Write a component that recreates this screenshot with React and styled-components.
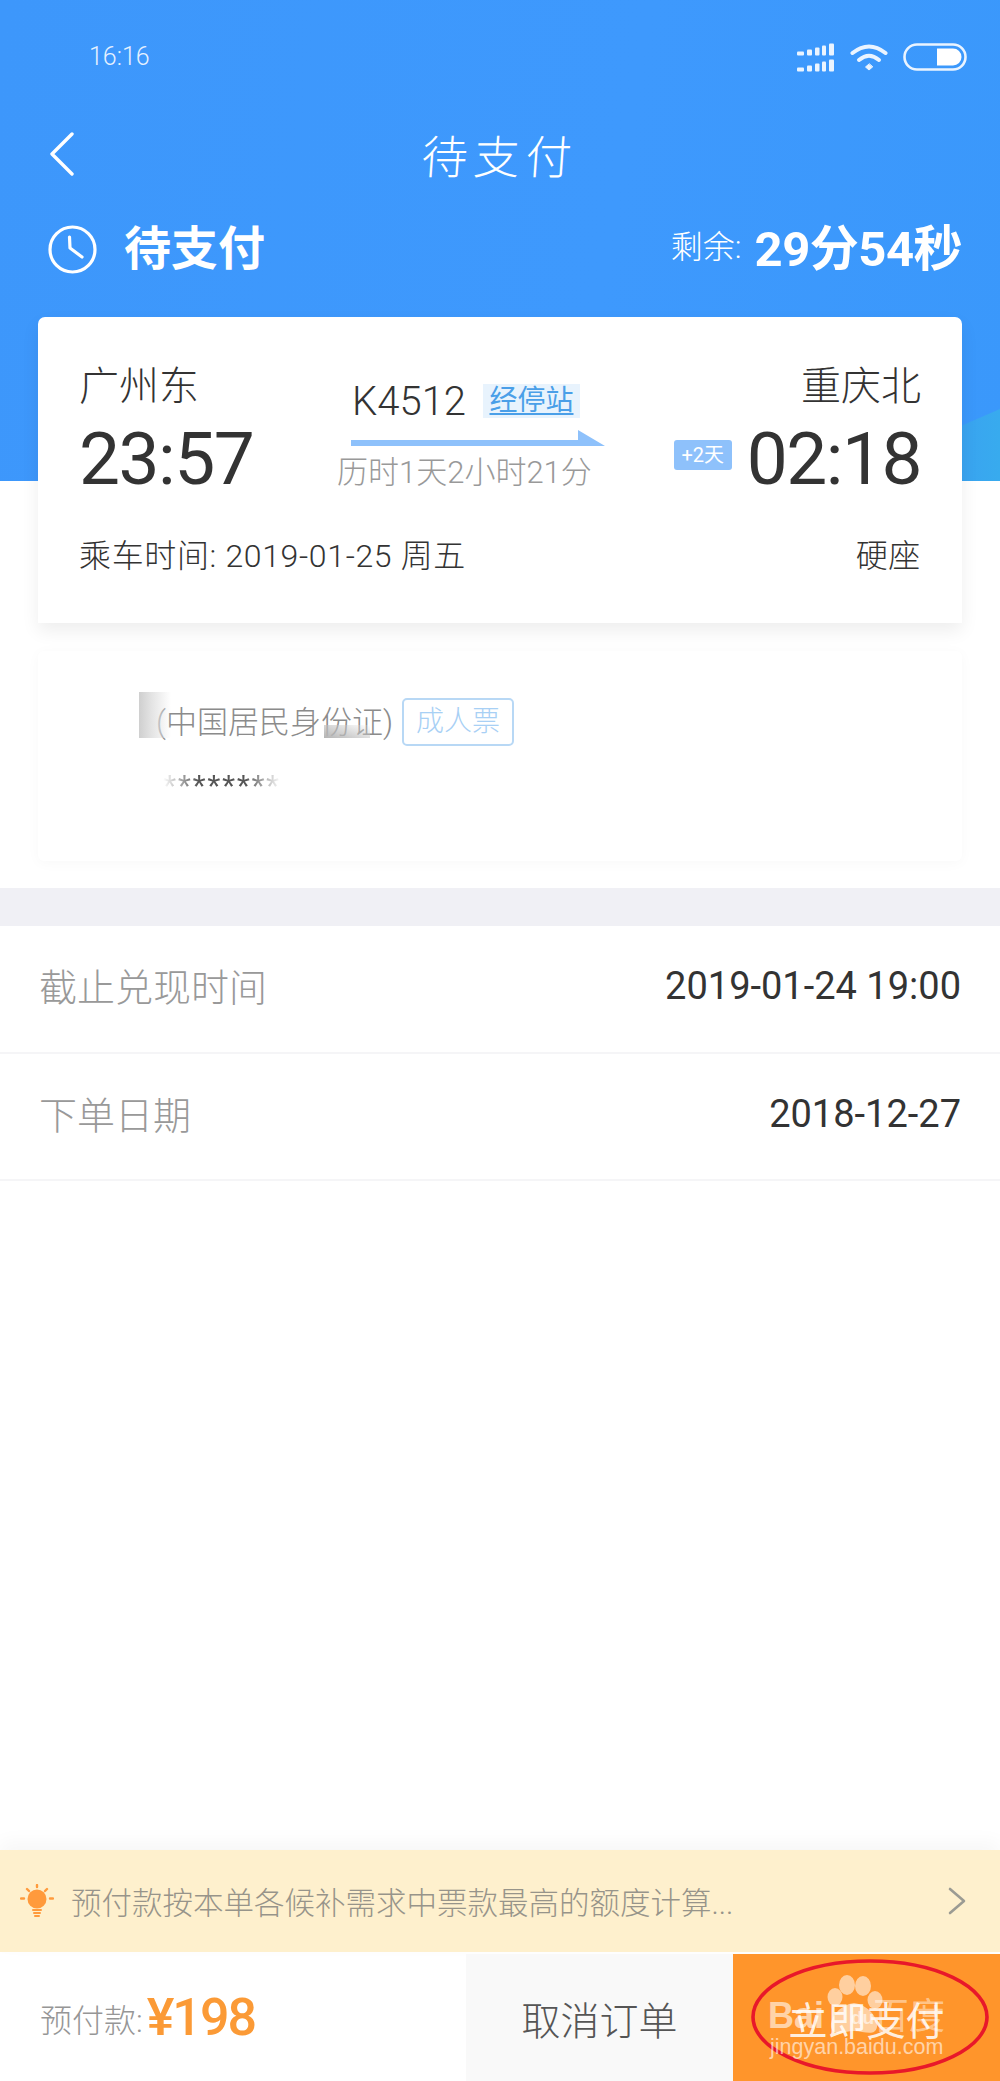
import React from 'react'
import styled, { createGlobalStyle } from 'styled-components'

const GlobalStyle = createGlobalStyle`
  html, body {
    margin: 0;
    padding: 0;
    background: #fff;
  }
  * {
    box-sizing: border-box;
  }
`

const sans = `Roboto, "Noto Sans CJK SC", sans-serif`

const Page = styled.div`
  width: 1000px;
  height: 2081px;
  display: flex;
  flex-direction: column;
  overflow: hidden;
  background: #fff;
  font-family: ${sans};
  color: #333;
`

const Hero = styled.header`
  position: relative;
  height: 481px;
  flex: none;
  color: #fff;
  background: linear-gradient(100deg, #3d97fb 0%, #3e99fd 60%, #3a98fb 100%);
  &::after {
    content: '';
    position: absolute;
    right: 0;
    bottom: 0;
    width: 60px;
    height: 72px;
    background: linear-gradient(90deg, #3a9ff2, #38abee);
    clip-path: polygon(0 26px, 100% 0, 100% 100%, 0 100%);
  }
`

const StatusBar = styled.div`
  height: 108px;
  padding: 43px 33px 0 89px;
  display: flex;
  justify-content: space-between;
  align-items: flex-start;
`

const Clock = styled.span`
  font-size: 25px;
  line-height: 28px;
  font-weight: 300;
  color: #e6f1ff;
`

const StatusIcons = styled.div`
  display: flex;
  align-items: flex-start;
  gap: 15px;
`

const NavBar = styled.div`
  height: 92px;
  margin-bottom: 13px;
  padding: 0 0 0 50px;
  display: flex;
  align-items: center;
  position: relative;
`

const NavTitle = styled.h1`
  position: absolute;
  left: 0;
  right: 0;
  margin: 0;
  text-align: center;
  font-size: 46px;
  font-weight: 300;
  letter-spacing: 6px;
  transform: skewX(-4deg);
`

const StateRow = styled.div`
  height: 72px;
  padding: 0 38px 0 48px;
  display: flex;
  align-items: center;
  justify-content: space-between;
`

const StateLeft = styled.div`
  display: flex;
  align-items: center;
  gap: 27px;
`

const StateTitle = styled.span`
  font-size: 47px;
  font-weight: 700;
  line-height: 60px;
`

const Remain = styled.div`
  display: flex;
  align-items: center;
  gap: 13px;
  margin-bottom: 10px;
`

const RemainLabel = styled.span`
  font-size: 32px;
  font-weight: 300;
`

const RemainValue = styled.span`
  font-size: 49px;
  font-weight: 700;
  letter-spacing: -0.5px;
`

const TicketCard = styled.section`
  position: relative;
  z-index: 1;
  flex: none;
  margin: -164px 38px 0;
  height: 306px;
  padding: 40px 41px 0 41px;
  background: #fff;
  border-radius: 7px 7px 0 0;
  box-shadow: 0 8px 18px rgba(0, 0, 0, 0.07);
`

const Route = styled.div`
  display: flex;
`

const Station = styled.div`
  flex: ${(p) => (p.$end ? '1' : 'none')};
  width: ${(p) => (p.$end ? 'auto' : '258px')};
  display: flex;
  flex-direction: column;
  align-items: ${(p) => (p.$end ? 'flex-end' : 'flex-start')};
`

const StationName = styled.div`
  font-size: 40px;
  line-height: 60px;
  font-weight: 300;
`

const TimeRow = styled.div`
  display: flex;
  align-items: center;
  gap: 15px;
`

const Time = styled.div`
  font-size: 73px;
  line-height: 84px;
  font-weight: 400;
  letter-spacing: -1.5px;
`

const DayBadge = styled.span`
  width: 58px;
  height: 30px;
  margin-top: -8px;
  border-radius: 3px;
  background: #8ec1fb;
  color: #fff;
  font-size: 20px;
  line-height: 30px;
  text-align: center;
`

const Middle = styled.div`
  width: 268px;
  flex: none;
  padding-top: 27px;
`

const TrainRow = styled.div`
  height: 34px;
  padding-left: 15px;
  display: flex;
  align-items: center;
  gap: 17px;
`

const TrainNo = styled.span`
  font-size: 40px;
  font-weight: 300;
`

const StopsTag = styled.span`
  width: 97px;
  height: 34px;
  background: #e8f3fd;
  color: #4a9fe8;
  font-size: 28px;
  line-height: 34px;
  text-align: center;
  text-decoration: underline;
  text-underline-offset: 3px;
`

const ArrowWrap = styled.div`
  margin: 12px 0 0 14px;
  height: 16px;
  display: flex;
`

const Duration = styled.div`
  margin-top: 9px;
  font-size: 31px;
  line-height: 36px;
  font-weight: 300;
  color: #999;
  white-space: nowrap;
`

const DateRow = styled.div`
  margin-top: 35px;
  display: flex;
  justify-content: space-between;
  font-size: 32px;
  line-height: 40px;
  font-weight: 300;
  letter-spacing: 0.65px;
`

const PassengerCard = styled.section`
  position: relative;
  flex: none;
  margin: 28px 38px 0;
  height: 210px;
  padding: 46px 0 0 118px;
  border-radius: 6px;
  background: #fff;
  box-shadow: 0 2px 14px rgba(0, 0, 0, 0.03);
`

const PassengerRow = styled.div`
  display: flex;
  align-items: center;
  gap: 9px;
  height: 50px;
`

const IdType = styled.span`
  margin-top: -6px;
  font-size: 31px;
  font-weight: 300;
  color: #8b8b8b;
`

const TicketTag = styled.span`
  width: 112px;
  height: 48px;
  border: 2px solid #b8d8f5;
  border-radius: 5px;
  color: #a8d0f5;
  font-size: 28px;
  line-height: 44px;
  text-align: center;
  font-weight: 300;
`

const Masked = styled.div`
  margin: 19px 0 0 7px;
  width: 118px;
  font-family: "Liberation Sans", sans-serif;
  font-size: 34px;
  line-height: 40px;
  letter-spacing: 1.5px;
  color: #555;
  white-space: nowrap;
  -webkit-mask-image: linear-gradient(90deg, transparent 0, #000 30%, #000 70%, transparent 100%);
  mask-image: linear-gradient(90deg, transparent 0, #000 30%, #000 70%, transparent 100%);
`

const Smudge = styled.div`
  position: absolute;
  left: ${(p) => p.$left}px;
  top: ${(p) => p.$top}px;
  width: ${(p) => p.$w}px;
  height: ${(p) => p.$h}px;
  background: ${(p) => p.$bg};
`

const Band = styled.div`
  flex: none;
  height: 38px;
  margin-top: 27px;
  background: #f0f0f5;
`

const InfoRow = styled.div`
  flex: none;
  height: ${(p) => p.$h}px;
  padding: 0 39px 6px;
  display: flex;
  align-items: center;
  justify-content: space-between;
  border-bottom: 2px solid #f5f5f7;
`

const InfoLabel = styled.span`
  margin-top: -3px;
  font-size: 38px;
  font-weight: 300;
  color: #999;
`

const InfoValue = styled.span`
  font-size: 38px;
  font-weight: 400;
  color: #333;
`

const Spacer = styled.div`
  flex: 1;
`

const TipBar = styled.div`
  flex: none;
  height: 102px;
  padding: 0 34px 0 20px;
  display: flex;
  align-items: center;
  background: #fef0cd;
  box-shadow: 0 -8px 18px rgba(0, 0, 0, 0.035);
`

const TipText = styled.span`
  flex: 1;
  margin-left: 17px;
  font-size: 30.5px;
  font-weight: 300;
  color: #97948a;
  white-space: nowrap;
`

const ActionBar = styled.footer`
  flex: none;
  height: 127px;
  margin-top: 2px;
  display: flex;
`

const Deposit = styled.div`
  width: 466px;
  padding-left: 40px;
  display: flex;
  align-items: center;
  gap: 4px;
`

const DepositLabel = styled.span`
  font-size: 32px;
  font-weight: 300;
  color: #969696;
`

const DepositValue = styled.span`
  font-size: 52px;
  font-weight: 500;
  color: #fb9a36;
  letter-spacing: -2px;
`

const Action = styled.button`
  position: relative;
  width: 267px;
  border: none;
  padding: 0;
  background: ${(p) => (p.$primary ? '#ff952b' : '#f9f9f9')};
  color: ${(p) => (p.$primary ? 'rgba(255, 255, 255, 0.85)' : '#555')};
  font-family: ${sans};
  font-size: 39px;
  font-weight: ${(p) => (p.$primary ? 400 : 300)};
`

const RedRing = styled.svg`
  position: absolute;
  left: 17px;
  top: 5px;
`

const MarkWord = styled.span`
  position: absolute;
  left: ${(p) => p.$left}px;
  top: ${(p) => p.$top}px;
  font-family: "Liberation Sans", "Noto Sans CJK SC", sans-serif;
  font-size: ${(p) => p.$size}px;
  line-height: 1;
  font-weight: ${(p) => p.$weight || 400};
  color: rgba(255, 255, 255, ${(p) => p.$alpha || 0.6});
  white-space: nowrap;
`

const SignalIcon = () => (
  <svg width="38" height="30" viewBox="0 0 38 30" fill="#eaf4ff">
    {[0, 16].map((y) => (
      <g key={y}>
        <rect x="0" y={y + 8.5} width="7" height="4" rx="1" />
        <rect x="10" y={y + 6.5} width="5" height="6" rx="1" />
        <rect x="18" y={y + 4.5} width="4.5" height="8" rx="1" />
        <rect x="25" y={y + 2.5} width="4" height="10" rx="1" />
        <rect x="32" y={y + 0.5} width="5" height="12" rx="1" />
      </g>
    ))}
  </svg>
)

const WifiIcon = () => (
  <svg width="38" height="28" viewBox="0 0 38 28" fill="none" stroke="#eaf4ff" strokeWidth="4" strokeLinecap="round">
    <path d="M2.5 10 Q19 -3 35.5 10" />
    <path d="M9 17 Q19 8.5 29 17" />
    <path d="M19 21 L15.5 24 L19 27 L22.5 24 Z" fill="#eaf4ff" strokeWidth="1" strokeLinejoin="round" />
  </svg>
)

const BatteryIcon = () => (
  <svg width="64" height="28" viewBox="0 0 64 28">
    <rect x="1.5" y="1.5" width="61" height="25" rx="12.5" fill="none" stroke="#eaf4ff" strokeWidth="2.6" />
    <path d="M34 5.5 H50 a8.5 8.5 0 0 1 0 17 H34 Z" fill="#fff" />
  </svg>
)

const BackIcon = () => (
  <svg width="24" height="44" viewBox="0 0 24 44" fill="none" stroke="#fff" strokeWidth="3.4" strokeLinecap="round" strokeLinejoin="round">
    <path d="M22 2 L2 22 L22 42" />
  </svg>
)

const ClockIcon = () => (
  <svg width="49" height="49" viewBox="0 0 49 49" fill="none" stroke="#fff" strokeWidth="3.2" strokeLinecap="round" strokeLinejoin="round">
    <circle cx="24.5" cy="24.5" r="22.5" />
    <path d="M21.5 12 L22 23 L34 32" />
  </svg>
)

const RouteArrow = () => (
  <svg width="254" height="16" viewBox="0 0 254 16" fill="#8ec1fb">
    <path d="M0 10 H227 V0 L254 16 H0 Z" />
  </svg>
)

const BulbIcon = () => (
  <svg width="34" height="34" viewBox="0 0 34 34" fill="#ff9a3c" stroke="#ff9a3c" strokeLinecap="round">
    <circle cx="17" cy="15" r="9.5" stroke="none" />
    <path d="M13 26 H21 M14 29 H20 M15 32 H19" strokeWidth="2" />
    <path d="M17 1 V3 M4 14.5 H1 M33 14.5 H30 M7 5 L9 7 M27 5 L25 7" strokeWidth="2.4" />
  </svg>
)

const MoreIcon = () => (
  <svg width="18" height="28" viewBox="0 0 18 28" fill="none" stroke="#9b9b93" strokeWidth="2.6" strokeLinecap="round" strokeLinejoin="round">
    <path d="M2 2 L16 14 L2 26" />
  </svg>
)

const BaiduMark = () => (
  <RedRing width="240" height="118" viewBox="0 0 240 118">
    <g fill="rgba(255,255,255,0.55)">
      <ellipse cx="97" cy="26" rx="8" ry="10" />
      <ellipse cx="113" cy="27" rx="8" ry="10" />
      <ellipse cx="85" cy="38" rx="7.5" ry="9" />
      <ellipse cx="125" cy="41" rx="7.5" ry="9" />
      <path d="M104 44 C118 46 128 58 127 68 C125 78 114 72 104 72 C94 72 83 78 81 68 C80 58 90 46 104 44 Z" />
    </g>
    <ellipse cx="120" cy="58" rx="117" ry="56" fill="none" stroke="#e8182a" strokeWidth="3.6" />
  </RedRing>
)

const App = () => (
  <Page>
    <GlobalStyle />
    <Hero>
      <StatusBar>
        <Clock>16:16</Clock>
        <StatusIcons>
          <SignalIcon />
          <WifiIcon />
          <BatteryIcon />
        </StatusIcons>
      </StatusBar>
      <NavBar>
        <BackIcon />
        <NavTitle>待支付</NavTitle>
      </NavBar>
      <StateRow>
        <StateLeft>
          <ClockIcon />
          <StateTitle>待支付</StateTitle>
        </StateLeft>
        <Remain>
          <RemainLabel>剩余:</RemainLabel>
          <RemainValue>29分54秒</RemainValue>
        </Remain>
      </StateRow>
    </Hero>

    <TicketCard>
      <Route>
        <Station>
          <StationName>广州东</StationName>
          <Time>23:57</Time>
        </Station>
        <Middle>
          <TrainRow>
            <TrainNo>K4512</TrainNo>
            <StopsTag>经停站</StopsTag>
          </TrainRow>
          <ArrowWrap>
            <RouteArrow />
          </ArrowWrap>
          <Duration>历时1天2小时21分</Duration>
        </Middle>
        <Station $end>
          <StationName>重庆北</StationName>
          <TimeRow>
            <DayBadge>+2天</DayBadge>
            <Time>02:18</Time>
          </TimeRow>
        </Station>
      </Route>
      <DateRow>
        <span>乘车时间: 2019-01-25 周五</span>
        <span>硬座</span>
      </DateRow>
    </TicketCard>

    <PassengerCard>
      <PassengerRow>
        <IdType>(中国居民身份证)</IdType>
        <TicketTag>成人票</TicketTag>
      </PassengerRow>
      <Masked>*********</Masked>
      <Smudge $left={101} $top={41} $w={32} $h={46} $bg="linear-gradient(90deg, #cfcfcf, #e4e4e4 40%, rgba(255,255,255,0))" />
      <Smudge $left={286} $top={74} $w={46} $h={13} $bg="linear-gradient(200deg, rgba(255,255,255,0.2), #b4b4b4)" />
    </PassengerCard>

    <Band />
    <InfoRow $h={128}>
      <InfoLabel>截止兑现时间</InfoLabel>
      <InfoValue>2019-01-24 19:00</InfoValue>
    </InfoRow>
    <InfoRow $h={127}>
      <InfoLabel>下单日期</InfoLabel>
      <InfoValue>2018-12-27</InfoValue>
    </InfoRow>
    <Spacer />

    <TipBar>
      <BulbIcon />
      <TipText>预付款按本单各候补需求中票款最高的额度计算...</TipText>
      <MoreIcon />
    </TipBar>
    <ActionBar>
      <Deposit>
        <DepositLabel>预付款:</DepositLabel>
        <DepositValue>¥198</DepositValue>
      </Deposit>
      <Action>取消订单</Action>
      <Action $primary>
        立即支付
        <BaiduMark />
        <MarkWord $left={35} $top={44} $size={36} $weight={700}>Bai</MarkWord>
        <MarkWord $left={118} $top={54} $size={19} $weight={700}>du</MarkWord>
        <MarkWord $left={140} $top={45} $size={36} $alpha={0.45}>百度</MarkWord>
        <MarkWord $left={37} $top={83} $size={21.5}>jingyan.baidu.com</MarkWord>
      </Action>
    </ActionBar>
  </Page>
)

export default App
